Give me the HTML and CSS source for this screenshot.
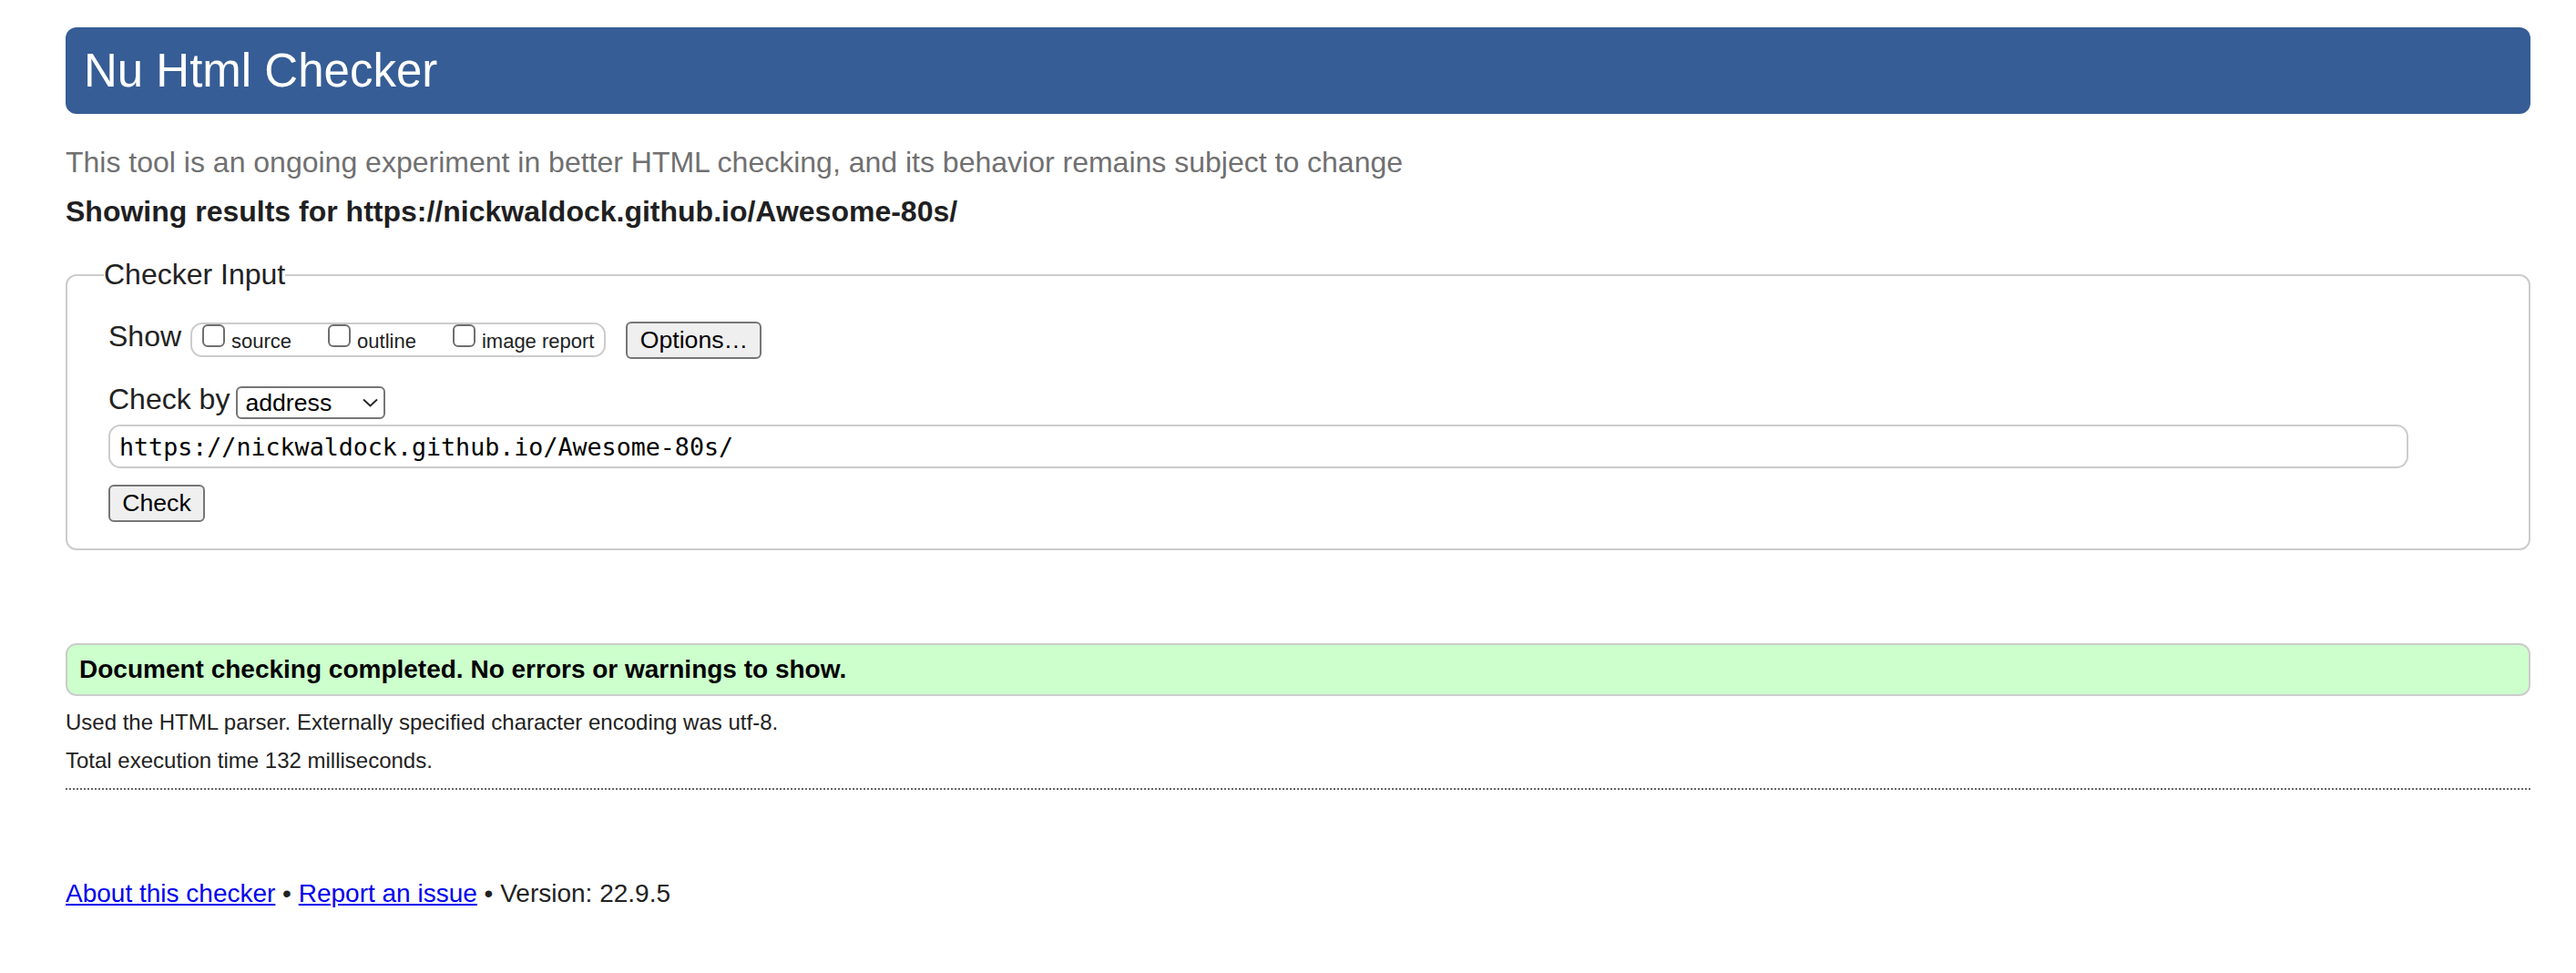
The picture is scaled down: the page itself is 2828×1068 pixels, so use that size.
FILE: index.html
```html
<!DOCTYPE html>
<html lang="en">
<head>
<meta charset="utf-8">
<title>Showing results for https://nickwaldock.github.io/Awesome-80s/ - Nu Html Checker</title>
<link rel="stylesheet" href="styles.css">
</head>
<body>
<h1 class="title">Nu Html Checker</h1>
<p class="intro">This tool is an ongoing experiment in better HTML checking, and its behavior remains subject to change</p>
<p class="showing">Showing results for https://nickwaldock.github.io/Awesome-80s/</p>
<form class="checker">
  <fieldset class="input-set">
    <legend class="legend">Checker Input</legend>
    <div class="show-row">
      <span class="row-label label-show">Show</span>
      <div class="checks">
        <label class="check"><input type="checkbox" class="box"><span class="check-text">source</span></label>
        <label class="check"><input type="checkbox" class="box"><span class="check-text">outline</span></label>
        <label class="check"><input type="checkbox" class="box"><span class="check-text">image report</span></label>
      </div>
      <button type="button" class="btn btn-options">Options…</button>
    </div>
    <div class="by-row">
      <span class="row-label label-by">Check by</span>
      <div class="select">
        <span class="select-text">address</span>
        <svg class="chev" width="17" height="10" viewBox="0 0 17 10"><polyline points="1,1.5 8.5,8.5 16,1.5" fill="none" stroke="#222" stroke-width="1.8"/></svg>
      </div>
    </div>
    <input class="url" type="text" value="https://nickwaldock.github.io/Awesome-80s/">
    <button type="button" class="btn btn-check">Check</button>
  </fieldset>
</form>
<div class="results">
  <p class="success">Document checking completed. No errors or warnings to show.</p>
  <p class="details details-first">Used the HTML parser. Externally specified character encoding was utf-8.</p>
  <p class="details">Total execution time 132 milliseconds.</p>
</div>
<p class="footer"><a href="#" class="flink">About this checker</a> • <a href="#" class="flink">Report an issue</a> • Version: 22.9.5</p>
</body>
</html>
```
FILE: styles.css
```css
html {
  background: #fff;
}
body {
  margin: 0;
  padding: 30px 50px 0 72px;
  font-family: "Liberation Sans", Arial, Helvetica, sans-serif;
  color: #222;
}
.title {
  margin: 0;
  padding: 18px 20px;
  font-size: 51px;
  line-height: 59px;
  font-weight: normal;
  color: #fff;
  background: #365d95;
  border-radius: 12px;
}
.intro {
  margin: 35px 0 0;
  font-size: 32px;
  line-height: 37px;
  color: #707070;
}
.showing {
  margin: 17px 0 0;
  font-size: 32px;
  line-height: 37px;
  font-weight: bold;
  color: #1f1f22;
}
.checker {
  margin: 32px 0 0;
}
.input-set {
  margin: 0;
  padding: 31px 45px 29px 45px;
  border: 2px solid #cccccc;
  border-radius: 12px;
  min-width: 0;
}
.legend {
  margin-left: -5px;
  padding: 0;
  font-size: 32px;
  line-height: 37px;
  color: #222;
}
.show-row {
  display: flex;
  align-items: flex-start;
}
.row-label {
  font-size: 32px;
  line-height: 37px;
  color: #222;
}
.label-show {
  margin-right: 10px;
}
.label-by {
  margin-right: 7px;
}
.checks {
  display: flex;
  align-items: flex-start;
  gap: 40px;
  box-sizing: border-box;
  height: 38px;
  margin-top: 3px;
  padding: 0 11px;
  border: 2px solid #cccccc;
  border-radius: 13px;
}
.check {
  display: flex;
  align-items: flex-start;
}
.box {
  appearance: none;
  -webkit-appearance: none;
  box-sizing: border-box;
  width: 25px;
  height: 25px;
  margin: 0;
  border: 2px solid #6f6f6f;
  border-radius: 6px;
  background: #fff;
}
.check-text {
  margin: 6px 0 0 7px;
  font-size: 22px;
  line-height: 25px;
  color: #222;
}
.btn {
  box-sizing: border-box;
  height: 41px;
  padding: 0;
  font-family: "Liberation Sans", Arial, sans-serif;
  font-size: 26.67px;
  color: #000;
  background: #efefef;
  border: 2px solid #767676;
  border-radius: 6px;
}
.btn-options {
  width: 149px;
  margin: 2px 0 0 22px;
}
.by-row {
  display: flex;
  align-items: flex-start;
  margin-top: 26px;
}
.select {
  display: flex;
  align-items: center;
  justify-content: space-between;
  box-sizing: border-box;
  width: 164px;
  height: 36px;
  margin-top: 4px;
  padding: 0 6px 0 8px;
  border: 2px solid #767676;
  border-radius: 6px;
  background: #fff;
}
.select-text {
  font-size: 26.67px;
  line-height: 30px;
  color: #000;
}
.chev {
  display: block;
}
.url {
  display: block;
  box-sizing: border-box;
  width: 2525px;
  height: 48px;
  margin: 6px 0 0;
  padding: 0 10px;
  font-family: "DejaVu Sans Mono", "Liberation Mono", monospace;
  font-size: 26.67px;
  color: #000;
  border: 2px solid #cccccc;
  border-radius: 13px;
  background: #fff;
  outline: none;
}
.btn-check {
  display: block;
  width: 106px;
  margin-top: 18px;
}
.results {
  padding-bottom: 16px;
  border-bottom: 2px dotted #666;
}
.success {
  margin: 102px 0 0;
  padding: 11px 13px;
  font-size: 28px;
  line-height: 32px;
  font-weight: bold;
  color: #000;
  background: #ccffcc;
  border: 2px solid #cccccc;
  border-radius: 12px;
}
.details {
  margin: 14px 0 0;
  font-size: 24px;
  line-height: 28px;
  color: #222;
}
.details-first {
  margin-top: 15px;
}
.footer {
  margin: 98px 0 0;
  font-size: 28px;
  line-height: 32px;
  color: #222;
}
.flink {
  color: #0000ee;
  text-decoration: underline;
}
```
